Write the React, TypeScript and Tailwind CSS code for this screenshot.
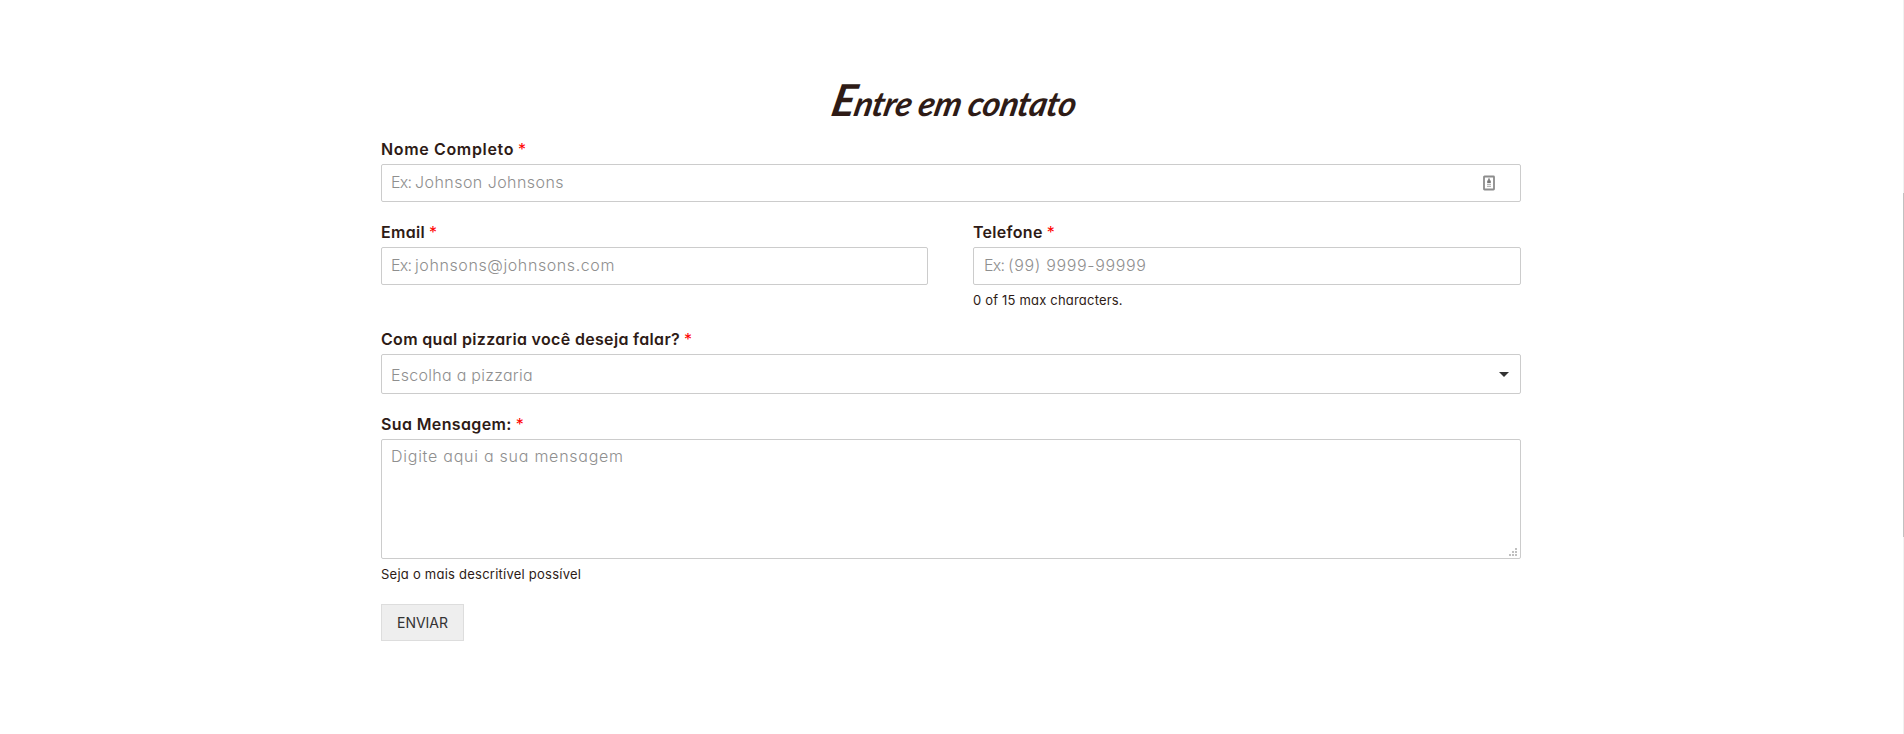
import type { ReactNode } from "react";

function Label({ children, spacing }: { children: string; spacing: string }) {
  return (
    <label className="flex h-[21px] gap-[4px] whitespace-pre text-[16px] font-semibold leading-[21px] text-[#2e1b16]">
      <span className={spacing}>{children}</span>
      <span className="font-normal text-[#ff0000]">*</span>
    </label>
  );
}

function Box({ children, className }: { children: ReactNode; className: string }) {
  return (
    <div className={`mt-[4px] flex rounded-[2px] border border-[#ccc] bg-white pl-[9px] ${className}`}>
      {children}
    </div>
  );
}

function Placeholder({ prefix, children, spacing }: { prefix?: string; children: string; spacing: string }) {
  return (
    <span className="flex whitespace-pre text-[16px] font-[350] leading-[24px] text-[#8f8f8f]">
      {prefix && <span className="w-[24px] tracking-[-0.8px]">{prefix}</span>}
      <span className={spacing}>{children}</span>
    </span>
  );
}

function ContactIcon() {
  return (
    <svg width="12" height="16" viewBox="0 0 12 16" className="mr-[25px] mt-px">
      <rect x="1" y="1.5" width="10" height="13" rx="0.5" fill="none" stroke="#8c8c8c" strokeWidth="1.8" />
      <path d="M5.2 3.5h1.6v2h1v2.6H4.2V5.500h1z" fill="#777" />
      <path d="M4 9.300h4M4 11.300h4" stroke="#b5b5b5" strokeWidth="1.2" />
    </svg>
  );
}

export default function App() {
  return (
    <div className="flex h-[734px] w-full bg-white font-[Inter,sans-serif] text-[#2e1b16] [font-feature-settings:'cv11']">
      <form className="ml-[381px] flex w-[1140px] flex-col pt-[75px]">
        <h2 className="block h-[64px] -skew-x-12 whitespace-pre pl-[5px] text-center font-[Lato,sans-serif] text-[34px] font-bold italic leading-[48px] tracking-[-0.45px] first-letter:text-[44px] first-letter:leading-[48px]">
          Entre em contato
        </h2>
        <Label spacing="tracking-[0.65px]">Nome Completo</Label>
        <Box className="h-[38px] items-center justify-between pb-[2px]">
          <Placeholder prefix="Ex: " spacing="tracking-[0.45px]">Johnson Johnsons</Placeholder>
          <ContactIcon />
        </Box>
        <div className="mt-[20px] flex h-[87px] gap-[45px]">
          <div className="w-[547px]">
            <Label spacing="tracking-[0.3px]">Email</Label>
            <Box className="h-[38px] items-center pb-[2px]">
              <Placeholder prefix="Ex: " spacing="tracking-[0.6px]">johnsons@johnsons.com</Placeholder>
            </Box>
          </div>
          <div className="w-[548px]">
            <Label spacing="tracking-[0.3px]">Telefone</Label>
            <Box className="h-[38px] items-center pb-[2px] pl-[10px]">
              <Placeholder prefix="Ex: " spacing="tracking-[0.65px]">(99) 9999-99999</Placeholder>
            </Box>
            <p className="mt-[5px] text-[13px] leading-[20px] tracking-[0.19px]">0 of 15 max characters.</p>
          </div>
        </div>
        <div className="mt-[20px]">
          <Label spacing="tracking-[0.33px]">Com qual pizzaria você deseja falar?</Label>
          <Box className="h-[40px] items-center justify-between">
            <Placeholder spacing="pt-px tracking-[0.27px]">Escolha a pizzaria</Placeholder>
            <svg width="10" height="5" viewBox="0 0 10 5" className="mr-[11px]">
              <path d="M0 0h10L5 5z" fill="#333" />
            </svg>
          </Box>
        </div>
        <div className="mt-[20px]">
          <Label spacing="tracking-[0.37px]">Sua Mensagem:</Label>
          <Box className="h-[120px] items-start justify-between pt-[4px]">
            <Placeholder spacing="tracking-[0.75px]">Digite aqui a sua mensagem</Placeholder>
            <svg width="8" height="8" viewBox="0 0 8 8" className="mb-[2px] mr-[3px] self-end">
              <path d="M6 0h2v2H6zM3 3h2v2H3zM6 3h2v2H6zM0 6h2v2H0zM3 6h2v2H3zM6 6h2v2H6z" fill="#c0c0c0" />
            </svg>
          </Box>
          <p className="mt-[5px] text-[13px] leading-[20px] tracking-[0.24px]">Seja o mais descritível possível</p>
        </div>
        <button
          type="button"
          className="mt-[20px] flex h-[37px] w-[83px] items-center justify-center border border-[#ddd] bg-[#eee] text-[14px] text-[#333]"
        >
          ENVIAR
        </button>
      </form>
      <div className="ml-auto w-px bg-[#f1f1f1] pt-[193px]">
        <div className="h-[344px] bg-[#c1c1c1]" />
      </div>
    </div>
  );
}
